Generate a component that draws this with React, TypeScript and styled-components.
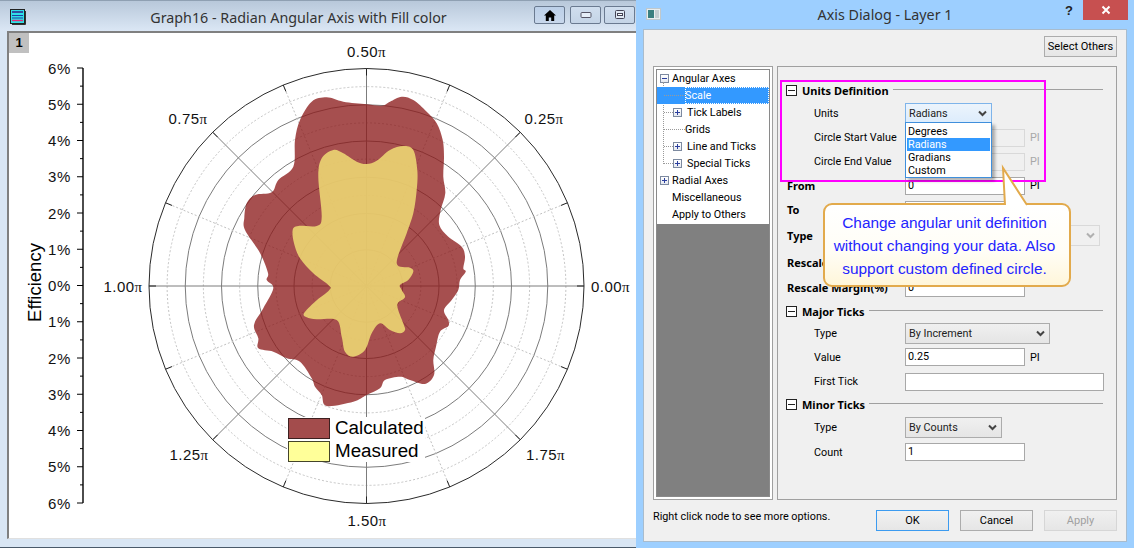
import React from "react";
import styled, { createGlobalStyle } from "styled-components";

const Global = createGlobalStyle`
  html, body { margin: 0; padding: 0; background: #9dcfff; overflow: hidden; }
  #root { width: 1134px; height: 548px; }
  * { box-sizing: border-box; }
`;

const uiFont = `Roboto, "Noto Sans", sans-serif`;
const boldFont = `"Noto Sans", Roboto, sans-serif`;
const titleFont = `"Noto Sans", "DejaVu Sans", sans-serif`;

const Desktop = styled.div`
  display: flex;
  width: 1134px;
  height: 548px;
  overflow: hidden;
  font-family: ${uiFont};
  font-size: 10.8px;
  color: #000;
`;

/* ---------- graph window ---------- */
const GraphWindow = styled.section`
  width: 636px;
  height: 548px;
  display: flex;
  flex-direction: column;
  background: #d9e6f4;
  border-bottom: 1px solid #4a5a6a;
`;
const GraphTitleBar = styled.header`
  height: 31px;
  flex: none;
  display: flex;
  align-items: center;
  padding: 2px 1px 0 10px;
  background: linear-gradient(#b8c8da, #dbe7f5);
  border-top: 1px solid #8fa0b2;
`;
const WindowTitle = styled.div`
  flex: 1;
  text-align: center;
  padding-left: 37px;
  font-family: ${titleFont};
  font-size: 14.3px;
  color: #333;
  white-space: nowrap;
`;
const GraphButtons = styled.div`
  display: flex;
  gap: 3px;
  margin-top: -4px;
`;
const CaptionButton = styled.button<{ $active?: boolean }>`
  width: 31px;
  height: 18px;
  padding: 0;
  margin-right: ${(p) => (p.$active ? 2 : 0)}px;
  display: flex;
  align-items: center;
  justify-content: center;
  border: 1px solid #6a7a90;
  border-radius: 2px;
  background: ${(p) => (p.$active ? "linear-gradient(#bcd0e8,#c8d8ec)" : "linear-gradient(#d0deee,#c4d4e6)")};
`;
const GraphBody = styled.div`
  flex: 1;
  margin: 0 0 8px 7px;
  position: relative;
  background: #fff;
  border-left: 2px solid #808080;
  border-top: 2px solid #808080;
  border-bottom: 1px solid #e0e0e0;
`;
const LayerBadge = styled.div`
  position: absolute;
  left: 0;
  top: 0;
  width: 20px;
  height: 20px;
  background: #c0c0c0;
  font: bold 13px "Liberation Sans", sans-serif;
  line-height: 20px;
  text-align: center;
`;
const ChartSvg = styled.svg`
  display: block;
  font-family: "Liberation Sans", Arial, sans-serif;
  fill: #000;
`;

/* ---------- dialog ---------- */
const Dialog = styled.section`
  width: 498px;
  height: 548px;
  display: flex;
  flex-direction: column;
  background: #9dcfff;
  padding: 0 7px 6px 7px;
`;
const DialogTitleBar = styled.header`
  height: 29px;
  flex: none;
  display: flex;
  align-items: flex-start;
  position: relative;
`;
const DialogIcon = styled.svg`
  margin: 8px 0 0 3px;
`;
const DialogTitle = styled.div`
  position: absolute;
  left: 0;
  right: 0;
  top: 5px;
  text-align: center;
  font-family: ${titleFont};
  font-size: 14.3px;
  color: #333;
`;
const HelpMark = styled.div`
  position: absolute;
  right: 54px;
  top: 3px;
  font: bold 13px "Liberation Sans", sans-serif;
  color: #222;
`;
const CloseButton = styled.button`
  position: absolute;
  right: -1px;
  top: 0;
  width: 45px;
  height: 20px;
  border: 0;
  padding: 0;
  background: #c75050;
  display: flex;
  align-items: center;
  justify-content: center;
`;
const DialogBody = styled.div`
  flex: 1;
  display: flex;
  flex-direction: column;
  background: #f0f0f0;
  border: 1px solid #a9bccd;
  padding: 6px 9px 0 9px;
`;
const TopBar = styled.div`
  display: flex;
  justify-content: flex-end;
  margin-bottom: 9px;
`;
const PlainButton = styled.button<{ $w: number; $primary?: boolean }>`
  width: ${(p) => p.$w}px;
  height: 21px;
  padding: 0;
  font: inherit;
  font-size: 11px;
  color: ${(p) => (p.disabled ? "#a0a0a0" : "#000")};
  background: ${(p) => (p.$primary ? "linear-gradient(#f2f2f2,#e6e6e6)" : "linear-gradient(#f0f0f0,#e6e6e6)")};
  border: 1px solid ${(p) => (p.$primary ? "#3c9bf0" : p.disabled ? "#d6d6d6" : "#acacac")};
`;
const MainRow = styled.div`
  display: flex;
  justify-content: space-between;
  height: 434px;
`;

/* tree */
const TreeFrame = styled.div`
  width: 120px;
  border: 1px solid #a0a0a0;
  padding: 2px;
  background: #fff;
`;
const TreeInner = styled.div`
  height: 100%;
  display: flex;
  flex-direction: column;
  border: 1px solid #8a8a8a;
  background: #fff;
`;
const TreeList = styled.div`
  flex: none;
`;
const TreeGroup = styled.div`
  position: relative;
  &::before {
    content: "";
    position: absolute;
    left: 6px;
    top: -5px;
    bottom: 8px;
    border-left: 1px dotted #9a9a9a;
  }
`;
const TreeRow = styled.div`
  height: 17px;
  display: flex;
  align-items: center;
  white-space: nowrap;
  position: relative;
`;
const RootSlot = styled.span`
  width: 15px;
  flex: none;
  display: flex;
  padding-left: 3px;
`;
const Connector = styled.span`
  width: 21px;
  flex: none;
  margin-left: 7px;
  border-top: 1px dotted #9a9a9a;
`;
const ChildConnector = styled(Connector)`
  width: 9px;
`;
const ExpandBox = styled.span`
  width: 9px;
  height: 9px;
  flex: none;
  border: 1px solid #7d8aa0;
  background: linear-gradient(#fff, #e4e8f0);
  position: relative;
  &::before {
    content: "";
    position: absolute;
    left: 1px;
    right: 1px;
    top: 3px;
    height: 1px;
    background: #2b3f9e;
  }
`;
const PlusBox = styled(ExpandBox)`
  &::after {
    content: "";
    position: absolute;
    top: 1px;
    bottom: 1px;
    left: 3px;
    width: 1px;
    background: #2b3f9e;
  }
`;
const ChildLabel = styled.span`
  margin-left: 5px;
`;
const SelectedRow = styled(TreeRow)`
  background: #3399ff;
  color: #fff;
`;
const SelectedLabel = styled.span`
  outline: 1px dotted #fff;
  outline-offset: -1px;
  padding: 0 2px 0 0;
  height: 17px;
  line-height: 17px;
  flex: 1;
`;
const GrayFill = styled.div`
  flex: 1;
  margin-top: 1px;
  background: #808080;
`;

/* form */
const FormPanel = styled.div`
  width: 340px;
  border: 1px solid #a0a0a0;
  padding: 12px 13px 0 0;
  position: relative;
`;
const SectionRow = styled.div<{ $h: number }>`
  height: ${(p) => p.$h}px;
  display: flex;
  align-items: center;
  padding-left: 8px;
  font-family: ${boldFont};
  font-size: 11px;
  font-weight: 700;
  white-space: nowrap;
`;
const CollapseBox = styled.span`
  width: 11px;
  height: 11px;
  flex: none;
  margin-right: 5px;
  border: 1px solid #222;
  background: #fff;
  position: relative;
  &::before {
    content: "";
    position: absolute;
    left: 1px;
    right: 1px;
    top: 4px;
    height: 1px;
    background: #222;
  }
`;
const SectionLine = styled.span`
  flex: 1;
  height: 1px;
  margin: -2px 0 0 4px;
  background: #a0a0a0;
`;
const FieldRow = styled.div<{ $h: number }>`
  height: ${(p) => p.$h}px;
  display: grid;
  grid-template-columns: 127px 1fr;
  align-items: center;
`;
const FieldLabel = styled.label<{ $strong?: boolean }>`
  padding-left: ${(p) => (p.$strong ? 9 : 36)}px;
  font-family: ${(p) => (p.$strong ? boldFont : uiFont)};
  font-size: ${(p) => (p.$strong ? 11 : 10.8)}px;
  font-weight: ${(p) => (p.$strong ? 700 : 400)};
  white-space: nowrap;
`;
const FieldControls = styled.div`
  display: flex;
  align-items: center;
  gap: 5px;
  position: relative;
`;
const TextBox = styled.div<{ $w: number; $disabled?: boolean }>`
  width: ${(p) => p.$w}px;
  height: 18px;
  line-height: 15px;
  padding-left: 2px;
  background: ${(p) => (p.$disabled ? "#f0f0f0" : "#fff")};
  border: 1px solid ${(p) => (p.$disabled ? "#d9d9d9" : "#a8a8a8")};
`;
const Unit = styled.span<{ $disabled?: boolean }>`
  color: ${(p) => (p.$disabled ? "#a8a8a8" : "#000")};
`;
const Combo = styled.div<{ $w: number; $active?: boolean; $disabled?: boolean }>`
  width: ${(p) => p.$w}px;
  height: 21px;
  display: flex;
  align-items: center;
  justify-content: space-between;
  padding: 0 4px 0 3px;
  color: #222;
  background: ${(p) =>
    p.$active
      ? "linear-gradient(#ecf4fc,#dcecfc)"
      : p.$disabled
      ? "#f0f0f0"
      : "linear-gradient(#f0f0f0,#e5e5e5)"};
  border: 1px solid ${(p) => (p.$active ? "#7eb4ea" : p.$disabled ? "#d9d9d9" : "#acacac")};
`;
const DropList = styled.ul`
  position: absolute;
  left: 0;
  top: 19px;
  width: 87px;
  margin: 0;
  padding: 2px 1px 0;
  list-style: none;
  background: #fff;
  border: 1px solid #3f8fdc;
  box-shadow: 3px 3px 3px rgba(0, 0, 0, 0.3);
  z-index: 3;
`;
const DropItem = styled.li<{ $on?: boolean }>`
  height: 13px;
  line-height: 13px;
  padding-left: 1px;
  background: ${(p) => (p.$on ? "#3399ff" : "transparent")};
  color: ${(p) => (p.$on ? "#fff" : "#000")};
`;
const PinkFrame = styled.div`
  position: absolute;
  left: 2px;
  top: 13px;
  width: 266px;
  height: 102px;
  border: 2px solid #ff00ff;
  pointer-events: none;
  z-index: 2;
`;
const Callout = styled.div`
  position: absolute;
  left: 45px;
  top: 136px;
  width: 248px;
  height: 84px;
  padding: 6px 5px 0 0;
  text-align: center;
  font: 15.4px/23px "Liberation Sans", Arial, sans-serif;
  color: #2424ff;
  background: linear-gradient(#ffffff, #fffdf5 60%, #fff6da);
  border: 2px solid #e2aa4c;
  border-radius: 9px;
  z-index: 4;
`;
const CalloutTail = styled.svg`
  position: absolute;
  left: 178px;
  top: -39px;
  overflow: visible;
`;

const Footer = styled.div`
  display: flex;
  align-items: flex-start;
  margin-top: 10px;
`;
const Hint = styled.div`
  flex: 1;
`;
const FooterButtons = styled.div`
  display: flex;
  gap: 11px;
`;

/* ---------- helpers ---------- */
const Chevron = ({ color = "#444" }: { color?: string }) => (
  <svg width="9" height="7" viewBox="0 0 9 7">
    <path d="M1 1.5 L4.5 5 L8 1.5" fill="none" stroke={color} strokeWidth="2" />
  </svg>
);

type P = [number, number];
const smooth = (pts: P[]) => {
  const n = pts.length;
  let d = `M${pts[0][0]} ${pts[0][1]}`;
  for (let i = 0; i < n; i++) {
    const a = pts[(i - 1 + n) % n], b = pts[i], c = pts[(i + 1) % n], e = pts[(i + 2) % n];
    const k = 6;
    d += `C${(b[0] + (c[0] - a[0]) / k).toFixed(1)} ${(b[1] + (c[1] - a[1]) / k).toFixed(1)} ${(c[0] - (e[0] - b[0]) / k).toFixed(1)} ${(c[1] - (e[1] - b[1]) / k).toFixed(1)} ${c[0]} ${c[1]}`;
  }
  return d + "Z";
};

const calcPts: P[] = [
  [366.7,104.3],[381.7,105.7],[390,101.7],[401.7,96.7],[413.3,100],[426.7,111.7],[436.7,123.3],[442.7,140],[444,156.7],[443.3,176.7],[445.3,193.3],[440.7,210],[439.3,225],[448.3,236.7],[461.7,246.7],[465,256.7],[463.3,268.3],[465.7,271.7],[460,280],[458.3,290],[451.7,300],[444,310],[448.3,320],[448.3,326],[440,331.7],[436,346.7],[433.3,360],[434,375],[425,384],[410,380],[400,376.7],[385,380],[380,388.3],[366.7,395],[353.3,401.7],[326.7,406],[321.7,395],[315,386.7],[311.7,378.3],[300,361.7],[286.7,358.3],[273.3,351.7],[258.3,348.3],[258.3,338.3],[254,325],[263.3,308.3],[273.3,288.3],[266.7,280],[268,273],[260,253],[245,230],[244.3,218],[246.7,203.3],[255,195],[271.7,192.3],[278.3,180],[293.3,166.7],[295,140],[300,120],[311.7,101.7],[326.7,97.3],[343.3,101.7],
];
const measuredZoom: P[] = [
  [500,222],[530,212],[570,180],[610,168],[640,180],[652,240],[650,300],[640,370],[620,430],[590,520],[630,533],[640,545],[625,570],[600,585],[605,600],[615,622],[592,645],[610,700],[615,720],[600,730],[570,720],[540,700],[515,730],[495,780],[460,800],[435,785],[425,740],[410,690],[350,688],[320,682],[312,670],[345,635],[388,600],[385,585],[340,550],[300,505],[282,460],[278,420],[295,408],[350,408],[365,380],[355,260],[365,205],[400,180],[430,190],[470,215],
];
const measuredPts: P[] = measuredZoom.map(([x, y]) => [+(x / 3 + 200).toFixed(1), +(y / 3 + 90).toFixed(1)]);

const CX = 366.5, CY = 286, R = 217.5;
const Pi = () => <tspan fontFamily="'Liberation Serif', serif">π</tspan>;

const angularLabels: [string, number, number][] = [
  ["0.50", 366.5, 57], ["0.25", 544, 124], ["0.00", 610.5, 292], ["1.75", 545.5, 460],
  ["1.50", 367, 526], ["1.25", 189, 460], ["1.00", 123, 292], ["0.75", 188, 124],
];
const radialLabels = [6, 5, 4, 3, 2, 1, 0, 1, 2, 3, 4, 5, 6];

const Chart = () => {
  const rings = Array.from({ length: 11 }, (_, i) => (i + 1) * (R / 12));
  const spokes = Array.from({ length: 16 }, (_, i) => (i * Math.PI) / 8);
  const step = (503 - 68) / 12;
  return (
    <ChartSvg width="627" height="504" viewBox="9 33 627 504">
      {rings.map((r, i) => (
        <circle key={r} cx={CX} cy={CY} r={r} fill="none" stroke={i % 2 ? "#7c7c7c" : "#c4c4c4"} strokeWidth="1" strokeDasharray={i % 2 ? undefined : "2 2"} />
      ))}
      {spokes.map((a, i) => (
        <g key={i}>
          <line x1={CX} y1={CY} x2={CX + R * Math.cos(a)} y2={CY - R * Math.sin(a)} stroke={i % 2 ? "#c0c0c0" : "#7c7c7c"} strokeDasharray={i % 2 ? "2 2" : undefined} />
          <line x1={CX + (R - 7) * Math.cos(a)} y1={CY - (R - 7) * Math.sin(a)} x2={CX + R * Math.cos(a)} y2={CY - R * Math.sin(a)} stroke="#222" />
        </g>
      ))}
      <circle cx={CX} cy={CY} r={R} fill="none" stroke="#2a2a2a" strokeWidth="1" />
      <path d={smooth(calcPts)} fill="#8b1a1a" fillOpacity="0.77" />
      <path d={smooth(measuredPts)} fill="#f0dc75" fillOpacity="0.86" />

      {angularLabels.map(([t, x, y]) => (
        <text key={t} x={x} y={y} fontSize="15" letterSpacing="0.4" textAnchor="middle" fill="#111">
          {t}<Pi />
        </text>
      ))}

      <line x1="83" y1="68" x2="83" y2="503" stroke="#000" strokeWidth="1.4" />
      {radialLabels.map((n, i) => {
        const y = 68 + i * step;
        return (
          <g key={i}>
            <line x1="77" y1={y} x2="83" y2={y} stroke="#000" />
            {i < 12 && <line x1="80" y1={y + step / 2} x2="83" y2={y + step / 2} stroke="#000" />}
            <text x="71" y={y + 5.5} fontSize="15" letterSpacing="0.7" textAnchor="end" fill="#111">{n}%</text>
          </g>
        );
      })}
      <text transform="translate(41 282.5) rotate(-90)" fontSize="18.5" textAnchor="middle" fill="#000">Efficiency</text>

      <rect x="287" y="417" width="138" height="45" fill="#fff" />
      <rect x="288.5" y="418.5" width="41" height="20" fill="#a34c4c" stroke="#3c2020" />
      <rect x="288.5" y="441.5" width="41" height="20" fill="#ffff99" stroke="#44442a" />
      <text x="335" y="433.5" fontSize="18.8" fill="#000">Calculated</text>
      <text x="335" y="457" fontSize="18.8" fill="#000">Measured</text>
    </ChartSvg>
  );
};

export default function App() {
  return (
    <Desktop>
      <Global />
      <GraphWindow>
        <GraphTitleBar>
          <svg width="16" height="16" viewBox="0 0 16 16">
            <rect x="0.5" y="0.5" width="14" height="14" fill="#2fe0e8" stroke="#222" />
            <rect x="2" y="2" width="11" height="2" fill="#3050a0" />
            <path d="M2 6.5h11M2 9h11" stroke="#2040a0" />
            <path d="M2 11.5h11" stroke="#e0307a" strokeWidth="1.4" />
            <path d="M15.5 2v13.5H2" fill="none" stroke="#333" />
          </svg>
          <WindowTitle>Graph16 - Radian Angular Axis with Fill color</WindowTitle>
          <GraphButtons>
            <CaptionButton $active aria-label="home">
              <svg width="12" height="11" viewBox="0 0 12 11">
                <path d="M6 0 L12 5.5 H10.2 V11 H7.2 V7.5 H4.8 V11 H1.8 V5.5 H0 Z" fill="#000" />
              </svg>
            </CaptionButton>
            <CaptionButton aria-label="minimize">
              <svg width="12" height="6" viewBox="0 0 12 6">
                <rect x="1" y="0.5" width="10" height="5" rx="1" fill="#e6eef8" stroke="#556" />
              </svg>
            </CaptionButton>
            <CaptionButton aria-label="restore">
              <svg width="12" height="10" viewBox="0 0 12 10">
                <rect x="1.5" y="0.5" width="9" height="8" rx="1" fill="#e0e8f2" stroke="#445" />
                <rect x="3.5" y="3.5" width="5" height="2" fill="#fff" stroke="#445" />
              </svg>
            </CaptionButton>
          </GraphButtons>
        </GraphTitleBar>
        <GraphBody>
          <Chart />
          <LayerBadge>1</LayerBadge>
        </GraphBody>
      </GraphWindow>

      <Dialog>
        <DialogTitleBar>
          <DialogIcon width="15" height="12" viewBox="0 0 15 12">
            <rect x="0.5" y="0.5" width="14" height="11" fill="#e8eef0" stroke="#c0c8cc" />
            <rect x="2" y="2" width="6" height="8" fill="#3a7f80" />
            <rect x="9" y="2" width="4" height="8" fill="#c4ced2" />
          </DialogIcon>
          <DialogTitle>Axis Dialog - Layer 1</DialogTitle>
          <HelpMark>?</HelpMark>
          <CloseButton aria-label="close">
            <svg width="10" height="10" viewBox="0 0 10 10">
              <path d="M1.5 1.5 L8.5 8.5 M8.5 1.5 L1.5 8.5" stroke="#fff" strokeWidth="2" />
            </svg>
          </CloseButton>
        </DialogTitleBar>
        <DialogBody>
          <TopBar>
            <PlainButton $w={73}>Select Others</PlainButton>
          </TopBar>
          <MainRow>
            <TreeFrame>
              <TreeInner>
                <TreeList>
                  <TreeRow><RootSlot><ExpandBox /></RootSlot>Angular Axes</TreeRow>
                  <TreeGroup>
                    <SelectedRow><Connector /><SelectedLabel>Scale</SelectedLabel></SelectedRow>
                    <TreeRow><ChildConnector /><PlusBox /><ChildLabel>Tick Labels</ChildLabel></TreeRow>
                    <TreeRow><Connector />Grids</TreeRow>
                    <TreeRow><ChildConnector /><PlusBox /><ChildLabel>Line and Ticks</ChildLabel></TreeRow>
                    <TreeRow><ChildConnector /><PlusBox /><ChildLabel>Special Ticks</ChildLabel></TreeRow>
                  </TreeGroup>
                  <TreeRow><RootSlot><PlusBox /></RootSlot>Radial Axes</TreeRow>
                  <TreeRow><RootSlot />Miscellaneous</TreeRow>
                  <TreeRow><RootSlot />Apply to Others</TreeRow>
                </TreeList>
                <GrayFill />
              </TreeInner>
            </TreeFrame>

            <FormPanel>
              <PinkFrame />
              <SectionRow $h={22}><CollapseBox />Units Definition<SectionLine /></SectionRow>
              <FieldRow $h={24}>
                <FieldLabel>Units</FieldLabel>
                <FieldControls>
                  <Combo $w={87} $active>Radians<Chevron /></Combo>
                  <DropList>
                    <DropItem>Degrees</DropItem>
                    <DropItem $on>Radians</DropItem>
                    <DropItem>Gradians</DropItem>
                    <DropItem>Custom</DropItem>
                  </DropList>
                </FieldControls>
              </FieldRow>
              <FieldRow $h={25}>
                <FieldLabel>Circle Start Value</FieldLabel>
                <FieldControls><TextBox $w={120} $disabled /><Unit $disabled>PI</Unit></FieldControls>
              </FieldRow>
              <FieldRow $h={23}>
                <FieldLabel>Circle End Value</FieldLabel>
                <FieldControls><TextBox $w={120} $disabled /><Unit $disabled>PI</Unit></FieldControls>
              </FieldRow>
              <FieldRow $h={25}>
                <FieldLabel $strong>From</FieldLabel>
                <FieldControls><TextBox $w={120}>0</TextBox><Unit>PI</Unit></FieldControls>
              </FieldRow>
              <FieldRow $h={23}>
                <FieldLabel $strong>To</FieldLabel>
                <FieldControls><TextBox $w={120} /><Unit>PI</Unit></FieldControls>
              </FieldRow>
              <FieldRow $h={28}>
                <FieldLabel $strong>Type</FieldLabel>
                <FieldControls>
                  <Combo $w={195} $disabled><span /><Chevron color="#b0b0b0" /></Combo>
                </FieldControls>
              </FieldRow>
              <FieldRow $h={26}>
                <FieldLabel $strong>Rescale</FieldLabel>
                <FieldControls />
              </FieldRow>
              <FieldRow $h={25}>
                <FieldLabel $strong>Rescale Margin(%)</FieldLabel>
                <FieldControls><TextBox $w={120}>0</TextBox></FieldControls>
              </FieldRow>
              <SectionRow $h={22}><CollapseBox />Major Ticks<SectionLine /></SectionRow>
              <FieldRow $h={22}>
                <FieldLabel>Type</FieldLabel>
                <FieldControls><Combo $w={145}>By Increment<Chevron /></Combo></FieldControls>
              </FieldRow>
              <FieldRow $h={26}>
                <FieldLabel>Value</FieldLabel>
                <FieldControls><TextBox $w={120}>0.25</TextBox><Unit>PI</Unit></FieldControls>
              </FieldRow>
              <FieldRow $h={23}>
                <FieldLabel>First Tick</FieldLabel>
                <FieldControls><TextBox $w={199} /></FieldControls>
              </FieldRow>
              <SectionRow $h={23}><CollapseBox />Minor Ticks<SectionLine /></SectionRow>
              <FieldRow $h={23}>
                <FieldLabel>Type</FieldLabel>
                <FieldControls><Combo $w={97}>By Counts<Chevron /></Combo></FieldControls>
              </FieldRow>
              <FieldRow $h={26}>
                <FieldLabel>Count</FieldLabel>
                <FieldControls><TextBox $w={120}>1</TextBox></FieldControls>
              </FieldRow>

              <Callout>
                <CalloutTail width="26" height="40" viewBox="0 0 26 40">
                  <path d="M2 39 L0 2 L24 39" fill="#fff" stroke="#e2aa4c" strokeWidth="2" />
                </CalloutTail>
                Change angular unit definition
                <br />
                without changing your data. Also
                <br />
                support custom defined circle.
              </Callout>
            </FormPanel>
          </MainRow>
          <Footer>
            <Hint>Right click node to see more options.</Hint>
            <FooterButtons>
              <PlainButton $w={73} $primary>OK</PlainButton>
              <PlainButton $w={73}>Cancel</PlainButton>
              <PlainButton $w={73} disabled>Apply</PlainButton>
            </FooterButtons>
          </Footer>
        </DialogBody>
      </Dialog>
    </Desktop>
  );
}
